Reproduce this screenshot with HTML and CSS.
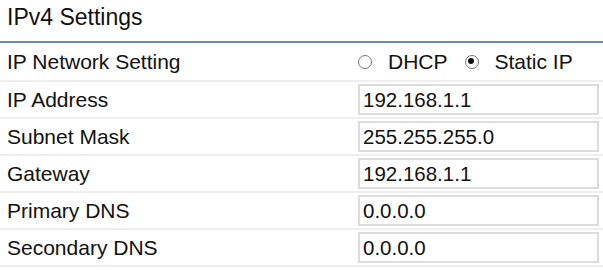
FILE: index.html
```html
<!DOCTYPE html>
<html lang="en">
<head>
  <meta charset="UTF-8" />
  <title>IPv4 Settings</title>
  <link rel="stylesheet" href="styles.css">
</head>
<body>

<div class="panel">
  <div class="title">IPv4 Settings</div>

  <div class="row first">
    <div class="label">IP Network Setting</div>
    <div class="field">
      <label class="radio"><span class="dot"></span>DHCP</label>
      <label class="radio"><span class="dot on"></span>Static IP</label>
    </div>
  </div>
  <div class="row">
    <div class="label">IP Address</div>
    <div class="field"><input class="box" type="text" value="192.168.1.1"></div>
  </div>
  <div class="row">
    <div class="label">Subnet Mask</div>
    <div class="field"><input class="box" type="text" value="255.255.255.0"></div>
  </div>
  <div class="row">
    <div class="label">Gateway</div>
    <div class="field"><input class="box" type="text" value="192.168.1.1"></div>
  </div>
  <div class="row">
    <div class="label">Primary DNS</div>
    <div class="field"><input class="box" type="text" value="0.0.0.0"></div>
  </div>
  <div class="row">
    <div class="label">Secondary DNS</div>
    <div class="field"><input class="box" type="text" value="0.0.0.0"></div>
  </div>
</div>

</body>
</html>
```

FILE: styles.css
```css
body {
  margin: 0;
  background: #fff;
  font-family: "Liberation Sans", Arial, sans-serif;
  color: #111;
}
.title {
  font-size: 23px;
  height: 41px;
  line-height: 34px;
  padding-left: 7px;
  border-bottom: 2px solid #6d89c2;
}
.row {
  display: flex;
  align-items: center;
  height: 35px;
  border-bottom: 2px solid #eeeeee;
}
.row.first {
  height: 37px;
}
.label {
  flex: none;
  width: 351px;
  padding-left: 7px;
  font-size: 21px;
}
.field {
  display: flex;
  align-items: center;
  width: 241px;
}
.radio {
  display: flex;
  align-items: center;
  font-size: 21px;
  margin-right: 17px;
}
.dot {
  flex: none;
  box-sizing: border-box;
  width: 14px;
  height: 14px;
  border: 1.5px solid #777;
  border-radius: 50%;
  margin-right: 16px;
  position: relative;
}
.dot.on::after {
  content: "";
  position: absolute;
  left: 2.5px;
  top: 2.5px;
  width: 6px;
  height: 6px;
  border-radius: 50%;
  background: #111;
}
.box {
  box-sizing: border-box;
  width: 241px;
  height: 31px;
  border: 2px solid #dcdcdc;
  padding: 0 3px;
  font-family: "Liberation Sans", Arial, sans-serif;
  font-size: 20.5px;
  color: #111;
  outline: none;
}
```
